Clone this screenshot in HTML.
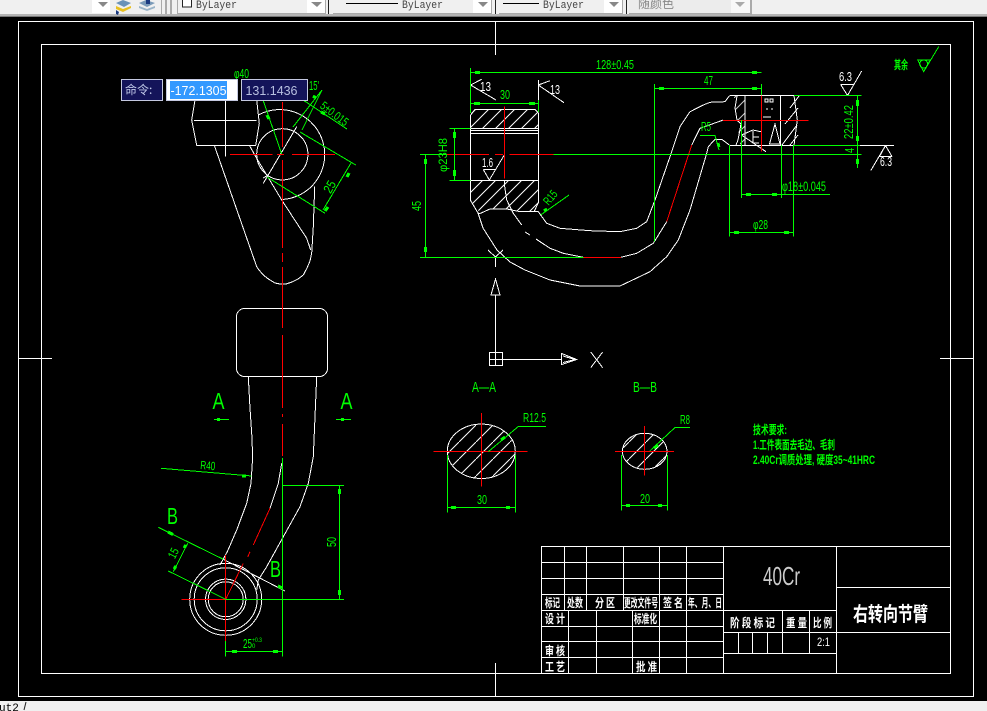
<!DOCTYPE html>
<html><head><meta charset="utf-8"><title>CAD</title>
<style>
html,body{margin:0;padding:0;background:#000;width:987px;height:711px;overflow:hidden}
svg{display:block;position:absolute;left:0;top:0}
text{font-family:"Liberation Sans","Noto Sans CJK SC",sans-serif}
.m{font-family:"Liberation Mono","Noto Sans CJK SC",monospace;fill:#444;font-size:11px}
.g text{fill:#0f0;stroke:none;font-size:13px}
.t text{fill:#fff;font-size:12px;font-weight:700;stroke:none;font-family:"Noto Sans CJK SC","Liberation Sans",sans-serif}
.c text{fill:#0f0;font-weight:700;font-size:12px;stroke:none;font-family:"Liberation Sans","Noto Sans CJK SC",sans-serif}
</style></head><body>
<svg width="987" height="711" viewBox="0 0 987 711" xmlns="http://www.w3.org/2000/svg">
<defs>
<pattern id="h1" patternUnits="userSpaceOnUse" width="13" height="13"><path d="M-1 14L14-1M-1 1L1-1M12 14L14 12" stroke="#fff" stroke-width="1" fill="none"/></pattern>
<pattern id="h2" patternUnits="userSpaceOnUse" width="17" height="17"><path d="M-1 18L18-1" stroke="#fff" stroke-width="1" fill="none"/></pattern>
</defs>
<rect width="987" height="711" fill="#000"/>
<!-- toolbar -->
<rect width="987" height="14" fill="#f0f0f0"/>
<rect y="14" width="987" height="3" fill="#b4b4b4"/>
<rect y="16" width="987" height="1" fill="#777"/>
<rect x="92" width="18" height="13" fill="#fff"/>
<rect x="161" width="1" height="14" fill="#aaa"/>
<rect x="165" width="2" height="14" fill="#aaa"/><rect x="170" width="2" height="14" fill="#aaa"/>
<path d="M98 2h10l-5 5z" fill="#888"/>
<path d="M116 3l7-3 8 3-7 4z" fill="#6a92b8"/><path d="M116 6l7 3 8-3v2l-8 4-7-3z" fill="#e8c020"/><path d="M116 10l3 2-1 3-2-1z" fill="#1a3a80"/>
<path d="M139 3l7-3 9 3-8 4z" fill="#7a9ab8"/><path d="M139 6l8 3 8-3v2l-8 3-8-3z" fill="#9ab4c8"/><path d="M146 0h4v4h-4z" fill="#1a3a80"/>
<rect x="177" y="13" width="148" height="1" fill="#aaa"/><rect x="177" width="1" height="13" fill="#aaa"/>
<rect x="307" width="18" height="13" fill="#fff"/><rect x="325" width="1" height="14" fill="#aaa"/>
<rect x="182.5" y="-1" width="9" height="8" fill="#fff" stroke="#222"/>
<path d="M311 2h11l-5 5z" fill="#888"/>
<text class="m" x="196" y="8" textLength="41" lengthAdjust="spacingAndGlyphs">ByLayer</text>
<rect x="328" width="1" height="14" fill="#222"/>
<rect x="333" y="13" width="159" height="1" fill="#aaa"/><rect x="491" width="1" height="14" fill="#aaa"/>
<rect x="473" width="18" height="13" fill="#fff"/>
<path d="M346 3.5h52" stroke="#000"/>
<text class="m" x="402" y="8" textLength="41" lengthAdjust="spacingAndGlyphs">ByLayer</text>
<path d="M478 2h10l-5 5z" fill="#888"/>
<rect x="495" width="1" height="14" fill="#222"/>
<rect x="499" y="13" width="124" height="1" fill="#aaa"/><rect x="622" width="1" height="14" fill="#aaa"/>
<rect x="604" width="18" height="13" fill="#fff"/>
<path d="M503 3.5h36" stroke="#000"/>
<text class="m" x="543" y="8" textLength="41" lengthAdjust="spacingAndGlyphs">ByLayer</text>
<path d="M609 2h10l-5 5z" fill="#888"/>
<rect x="626" width="1" height="14" fill="#222"/>
<rect x="629" width="122" height="13" fill="#ececec"/><rect x="629" y="13" width="122" height="1" fill="#aaa"/><rect x="750" width="2" height="15" fill="#aaa"/>
<rect x="731" width="19" height="13" fill="#f8f8f8"/>
<path d="M735 2h10l-5 5z" fill="#aaa"/>
<text class="m" x="638" y="8" style="font-size:12px;fill:#888">随颜色</text>

<!-- bottom bar -->
<rect y="701" width="987" height="10" fill="#f0f0f0"/>
<text class="m" x="-1" y="711" style="fill:#000;font-size:11px">ut2</text>
<path d="M26 702l-2 8" stroke="#222"/>

<g shape-rendering="crispEdges">
<!-- frames -->
<g fill="none" stroke="#fff" stroke-width="1">
<rect x="18.5" y="21.5" width="955" height="675"/>
<rect x="41.5" y="44.5" width="909" height="629"/>
<path d="M495.5 21v34M495.5 663v33M18 358.5h34M940 358.5h33"/>
<!-- top-left view -->
<path d="M195 100L191.7 120L196.7 145.3H255.7L259.3 123.3L256.7 100"/>
<path d="M194 120.5H256.7M225.5 100V156.7"/>
<path d="M214.3 145.3L256.7 266.7L259 270L263.3 275L267 278L270 280L275 283L280 284L286 284L292 282L298 279L303.3 275L307 268L310 261L311.7 253L313.3 226.7L314.7 186.7"/>
<path d="M249.3 145.3L256.7 158.3L281.7 200L306.7 238.3L310.7 250"/>
<path d="M263.3 183.3L296.7 126.7"/>
<path d="M263.3 178L268 175"/>
<path d="M282.3 199.5A45 45 0 1 0 258.3 115"/>
<circle cx="282.3" cy="154.3" r="25.6"/>
<!-- lower-left view -->
<rect x="236.5" y="308.5" width="91" height="68" rx="8"/>
<path d="M248.3 376.7L250 408.3L251.7 433.3L252.7 456.7L251 483.3L246.7 503.3L236.7 530L227.3 551.7L220 565"/>
<path d="M316.7 376.7L315 416.7L313.3 456.7L308.3 483.3L300 506.7L283.3 536.7L266.7 566.7L258.3 580L256.7 590"/>
<path d="M281.7 463.3L278.3 483.3L270 508.3"/>
<path d="M223.3 559.3L285 591"/>
<circle cx="225.7" cy="599.3" r="36"/><circle cx="225.7" cy="599.3" r="31.5"/>
<circle cx="225.7" cy="599.3" r="20.2"/><circle cx="225.7" cy="599.3" r="17.5"/>
<!-- side view -->
<path d="M470.7 115L475 109.3H535L538.3 113V203L534 211.7"/>
<path d="M470.7 115V200.7L478 213L480 213.5L490 209L507 209L520 211.7L538.3 211.7"/>
<path d="M470.7 128.5H538.3M470.7 130.5H538.3M470.7 133.5H538.3M470.7 180.5H538.3"/>
<path d="M538.3 211.7L546.7 223.3L560 228.3L590 230.7L620 231.7L636.7 228.3L646.7 221.7L655 200L670 156.7L680 126.7L690 111.7L703.3 105L710 102.3L725 101.7L729.3 96"/>
<path d="M478 213L483 228L497 250L510 262L525 270L550 280L580 286L620 286L650 271.7L666.7 256.7L678.3 240L690 210L706.7 153.3L708.3 146.7L715 139.3L721.7 139.3L729.3 145"/>
<path d="M504.7 180V186.7L506.7 200L513.3 213.3L521.7 225M525 232L530 235M536 239L550 248.3L563.3 253.3L583.3 257.3M621 257.3L636.7 253.3L653.3 243.3L666.7 221.7M691.7 145L700 128.3L723.3 120"/>
<!-- hub -->
<path d="M729.3 95.5H794M729.3 145.5H794"/>
<path d="M794 95.5L797.3 120L794 145.5"/>
<path d="M780.7 95.5V145.5M737 96L735 108L737 120L741 124L738 140L736 145M745 96V145"/>
<path d="M765 99h3v3h-3zM770 99h3v3h-3zM766 109h2M771 109h2M763 117h8M741.5 135L753 130L762 132M741.5 135L766 151.7M753 131V143h6M753 137h6M769.5 144L775 124L780 144M769 144H781"/>
<path d="M799 96L790 108M798 108L785 124M797 125L782 145M790 145L798 135"/>
<path d="M470.5 85L481.7 79.3M470.5 85L496 100M538.3 85L550 80.7M538.3 85L564 102.7M538.5 80V100"/>
<path d="M483.3 169.5H496M483.3 169.5L489.3 180L504.3 155"/>
<path d="M840.7 84.5H854M840.7 84.5L847.5 95.5L861.7 71"/>
<path d="M879.5 156.5H892M885.5 145.5L879.5 156.5M885.5 145.5L892 156.5M885.5 145.5L870.7 170.7"/>
<path d="M860 145.5H894"/>
<path d="M491 295L495.5 279L500 295ZM495.5 295V352"/>
<rect x="489.5" y="352.5" width="13" height="13"/>
<path d="M489.5 359.5H502.5M495.5 352.5V365.5M502.7 359.5H561.7"/>
<path d="M561.7 353.5L576.7 359.5L561.7 364.5Z"/>
<path d="M563 356L575 359.5L563 362.5M590.7 352L602.7 367.7M602.7 352L590.7 367.7"/>
<path d="M495.5 257V267M488 250L495.5 257L503 250"/>
<!-- sections -->
<ellipse cx="481.3" cy="451.3" rx="34" ry="27.2"/>
<ellipse cx="644.7" cy="451.3" rx="22.3" ry="18"/>
</g>
<rect x="471" y="110" width="67" height="18" fill="url(#h1)"/>
<path d="M471 181H538V203L534 211H520L507 209H490L480 213L471 201Z" fill="url(#h1)"/>
<path d="M734 96H745V145H740Z" fill="url(#h1)" opacity=".8"/>
<ellipse cx="481.3" cy="451.3" rx="33.5" ry="26.7" fill="url(#h2)"/>
<ellipse cx="644.7" cy="451.3" rx="21.8" ry="17.5" fill="url(#h2)"/>

<!-- red -->
<g fill="none" stroke="#f00" stroke-width="1">
<path d="M230 154.5H272.7M277 154.5H284M292 154.5H335"/>
<path d="M282.5 102V147M282.5 160V248M282.5 253V262M282.5 267V328M282.5 335V408M282.5 414V417M282.5 424V456"/>
<path d="M270 508.3L253.3 545M250 551.7L247.7 557M243.3 563.3L225.7 599.3"/>
<path d="M181.7 599.5H225.7M225.5 555V641.7"/>
<path d="M504.5 106.7V178.3"/>
<path d="M446.7 154.5H489M495 154.5H503M509.3 154.5H553.3"/>
<path d="M583.3 257.5H621M666.7 221.7L691.7 145"/>
<path d="M761.5 95.3V151.7M723 120.5H808.7"/>
<path d="M433.3 451.5H527.7M481.5 413V486.7M615 451.5H674M644.5 426V475.7"/>
</g>

<!-- green lines -->
<g fill="none" stroke="#0f0" stroke-width="1">
<path d="M263 100L281.7 154M293 127L322 90M302 130L322 90M303 100L347 129"/>
<path d="M300 132L355.7 165M267 177L325 213.3M323 210L351 163"/>
<path d="M282.5 458V656.7M225.7 599.5H344M282.7 485.5H344M339.5 485.3V599.3M161 468.3L251.7 476M214 419.5H229M336 419.5H351"/>
<path d="M158.3 527.3L223.3 559.3M168.3 571L225.7 599.3M187.7 543.3L173.3 571.7"/>
<path d="M225.5 641V656.7M225.7 651.5H282.7"/>
<path d="M470.5 68V113M470.7 72.5H761.7M761.5 84V95M654.5 84V241.7M654.5 88.5H761.7M470.7 103.5H538.3M538.5 100V112"/>
<path d="M420 154.5H446.7M553.3 154.5H861.7M449.3 128.5H470.7M449.3 180.5H470.7M454.5 128.5V180.5"/>
<path d="M420 257.5H583.3M425.5 154.5V257.5M540.7 215L569 195"/>
<path d="M794 95.5H861.7M794 145.5H860M857.5 95V168"/>
<path d="M741.5 120V198M781.5 145V198M741.5 194.5H830M729.5 145V236.7M793.5 145V236.7M729.5 232.5H793.5"/>
<path d="M700 135.5H715L719 150"/>
<path d="M546 426.5H518.3L488.3 451.7M690 427.5H675L650 450.7"/>
<path d="M447.5 455V512.7M515.5 455V512.7M447.5 507.5H515.5M621.5 455V510.7M667.5 455V510.7M621.5 505.5H667.5"/>
<path d="M917.7 60H930.3L923.7 71.7ZM923.7 71.7L938.7 46.7"/>
<circle cx="923.7" cy="64" r="4"/>
</g>
<!-- green arrow marks -->
<g fill="none" stroke="#0f0" stroke-width="3">
<path d="M475 72.5h5M752 72.5h5M659 88.5h5M752 88.5h5M474 103.5h6M529 103.5h6"/>
<path d="M454.5 132v6M454.5 170v6M425.5 159v5M425.5 247v5"/>
<path d="M857.5 100v6M857.5 136v5M857.5 159v5"/>
<path d="M746 194.5h5M772 194.5h5M734 232.5h5M784 232.5h5"/>
<path d="M339.5 489v5M339.5 590v5M232 651.5h5M273 651.5h5"/>
<path d="M242 476h4M217 419.5h3M341 419.5h3"/>
<path d="M168 532l5 2.5M278 586l4 2M186 545l-2 3M176 566l-2 3"/>
<path d="M267 115l2 4M313 96l3 2M321 112l4 2"/>
<path d="M349 173l-2 4M328 207l-3 4"/>
<path d="M451 507.5h5M506 507.5h4M626 505.5h4M658 505.5h4"/>
<path d="M505 437l-4 3M658 445l-4 3M544 211l3-2M718 143l1 4"/>
</g>

<!-- white table -->
<g fill="none" stroke="#fff" stroke-width="1">
<rect x="541.5" y="546.5" width="409" height="127"/>
<path d="M541.5 562.5H723.5M541.5 578.5H723.5M541.5 594.5H723.5M541.5 610.5H836.5M541.5 626.5H723.5M541.5 641.5H723.5M541.5 657.5H723.5"/>
<path d="M564.5 546.5V610.5M586.5 546.5V610.5M623.5 546.5V610.5M659.5 546.5V673.5M686.5 546.5V673.5M723.5 546.5V673.5"/>
<path d="M568.5 610.5V673.5M596.5 610.5V673.5M632.5 610.5V673.5"/>
<path d="M836.5 546.5V673.5M836.5 587.5H950.5M723.5 632.5H950.5M723.5 653.5H836.5"/>
<path d="M738.5 632.5V653.5M752.5 632.5V653.5M767.5 632.5V653.5M782.5 610.5V653.5M809.5 610.5V653.5"/>
</g>
</g>

<!-- green text -->
<g class="g">
<text x="234" y="78" textLength="15" lengthAdjust="spacingAndGlyphs">φ40</text>
<text x="309" y="90" textLength="10" lengthAdjust="spacingAndGlyphs">15'</text>
<text transform="translate(321 105) rotate(37)" x="0" y="3" textLength="32" lengthAdjust="spacingAndGlyphs" style="font-size:12px">5±0.015</text>
<text transform="translate(330 187) rotate(-60)" x="-6" y="4" textLength="12" lengthAdjust="spacingAndGlyphs">25</text>
<text x="596" y="69" textLength="38" lengthAdjust="spacingAndGlyphs">128±0.45</text>
<text x="704" y="85" textLength="9" lengthAdjust="spacingAndGlyphs">47</text>
<text x="500" y="99" textLength="10" lengthAdjust="spacingAndGlyphs">30</text>
<text transform="translate(447 155) rotate(-90)" x="-17" y="0" textLength="34" lengthAdjust="spacingAndGlyphs" style="font-size:12px">φ23H8</text>
<text transform="translate(421 206) rotate(-90)" x="-5" y="0" textLength="10" lengthAdjust="spacingAndGlyphs">45</text>
<text transform="translate(550 198) rotate(-50)" x="-7" y="4" textLength="15" lengthAdjust="spacingAndGlyphs" style="font-size:12px">R15</text>
<text x="701" y="131" textLength="10" lengthAdjust="spacingAndGlyphs">R5</text>
<text transform="translate(853 122) rotate(-90)" x="-17" y="0" textLength="34" lengthAdjust="spacingAndGlyphs">22±0.42</text>
<text transform="translate(854 150) rotate(-90)" x="-3" y="0" textLength="5" lengthAdjust="spacingAndGlyphs">4</text>
<text x="782" y="191" textLength="44" lengthAdjust="spacingAndGlyphs" style="font-size:14px">φ18±0.045</text>
<text x="753" y="229" textLength="15" lengthAdjust="spacingAndGlyphs">φ28</text>
<text transform="translate(200 469) rotate(5)" textLength="15" lengthAdjust="spacingAndGlyphs" style="font-size:12px">R40</text>
<text x="212.5" y="409" textLength="12" lengthAdjust="spacingAndGlyphs" style="font-size:23px">A</text>
<text x="340.5" y="409" textLength="12" lengthAdjust="spacingAndGlyphs" style="font-size:23px">A</text>
<text x="167" y="524" textLength="11" lengthAdjust="spacingAndGlyphs" style="font-size:23px">B</text>
<text x="270" y="577" textLength="11" lengthAdjust="spacingAndGlyphs" style="font-size:23px">B</text>
<text transform="translate(177 555) rotate(-63)" x="-5" y="0" textLength="10" lengthAdjust="spacingAndGlyphs" style="font-size:12px">15</text>
<text transform="translate(336 542) rotate(-90)" x="-5" y="0" textLength="10" lengthAdjust="spacingAndGlyphs">50</text>
<text x="243" y="648" textLength="9" lengthAdjust="spacingAndGlyphs">25</text>
<text x="252" y="642" textLength="10" lengthAdjust="spacingAndGlyphs" style="font-size:6px">+0.3</text>
<text x="252" y="648" style="font-size:6px">0</text>
<text x="472" y="392" textLength="24" lengthAdjust="spacingAndGlyphs" style="font-size:15px">A—A</text>
<text x="633" y="392" textLength="24" lengthAdjust="spacingAndGlyphs" style="font-size:15px">B—B</text>
<text x="523" y="422" textLength="23" lengthAdjust="spacingAndGlyphs">R12.5</text>
<text x="680" y="424" textLength="10" lengthAdjust="spacingAndGlyphs">R8</text>
<text x="477" y="504" textLength="10" lengthAdjust="spacingAndGlyphs">30</text>
<text x="640" y="503" textLength="10" lengthAdjust="spacingAndGlyphs">20</text>
</g>
<g class="c">
<text x="894" y="69" textLength="14" lengthAdjust="spacingAndGlyphs" style="font-size:12px">其余</text>
<text x="753" y="434" textLength="34" lengthAdjust="spacingAndGlyphs">技术要求:</text>
<text x="753" y="449" textLength="82" lengthAdjust="spacingAndGlyphs">1.工件表面去毛边、毛刺</text>
<text x="753" y="464" textLength="122" lengthAdjust="spacingAndGlyphs">2.40Cr调质处理, 硬度35~41HRC</text>
</g>
<g fill="#fff" font-size="13" stroke="none">
<text x="482" y="167" textLength="11" lengthAdjust="spacingAndGlyphs">1.6</text>
<text x="839" y="81" textLength="13" lengthAdjust="spacingAndGlyphs">6.3</text>
<text x="880" y="166" textLength="12" lengthAdjust="spacingAndGlyphs">6.3</text>
<text x="480" y="91" textLength="11" lengthAdjust="spacingAndGlyphs">13</text>
<text x="550" y="94" textLength="10" lengthAdjust="spacingAndGlyphs">13</text>
<text x="763" y="585" textLength="37" lengthAdjust="spacingAndGlyphs" font-size="26" fill="#ccc">40Cr</text>
<text x="817" y="646" textLength="13" lengthAdjust="spacingAndGlyphs" font-size="12">2:1</text>
</g>
<text x="853" y="621" textLength="75" lengthAdjust="spacingAndGlyphs" style="font-size:20px;font-weight:700;fill:#fff;font-family:'Noto Sans CJK SC',sans-serif">右转向节臂</text>
<g class="t">
<text x="545" y="607" textLength="15" lengthAdjust="spacingAndGlyphs">标记</text>
<text x="567" y="607" textLength="16" lengthAdjust="spacingAndGlyphs">处数</text>
<text x="595" y="607" textLength="20" lengthAdjust="spacingAndGlyphs">分 区</text>
<text x="624" y="607" textLength="34" lengthAdjust="spacingAndGlyphs">更改文件号</text>
<text x="663" y="607" textLength="20" lengthAdjust="spacingAndGlyphs">签 名</text>
<text x="688" y="607" textLength="34" lengthAdjust="spacingAndGlyphs">年、月、日</text>
<text x="545" y="623" textLength="20" lengthAdjust="spacingAndGlyphs">设 计</text>
<text x="634" y="623" textLength="23" lengthAdjust="spacingAndGlyphs">标准化</text>
<text x="545" y="655" textLength="20" lengthAdjust="spacingAndGlyphs">审 核</text>
<text x="545" y="671" textLength="20" lengthAdjust="spacingAndGlyphs">工 艺</text>
<text x="636" y="671" textLength="21" lengthAdjust="spacingAndGlyphs">批 准</text>
<text x="730" y="627" textLength="45" lengthAdjust="spacingAndGlyphs">阶 段 标 记</text>
<text x="786" y="627" textLength="21" lengthAdjust="spacingAndGlyphs">重 量</text>
<text x="813" y="627" textLength="19" lengthAdjust="spacingAndGlyphs">比 例</text>
</g>

<!-- command input -->
<rect x="121.5" y="79.5" width="41" height="21" fill="#14145a" stroke="#c4c8e0"/>
<text x="125" y="94" style="font-size:12px;fill:#c0c8e8;font-family:'Noto Sans CJK SC',sans-serif">命令:</text>
<rect x="166.5" y="79.5" width="71" height="21" fill="#fff" stroke="#c4c8e0"/>
<rect x="170" y="81" width="57" height="18" fill="#3399ff"/>
<text x="170.5" y="95" textLength="56" lengthAdjust="spacingAndGlyphs" style="font-size:13px;fill:#fff">-172.1305</text>
<rect x="241.5" y="79.5" width="66" height="21" fill="#14145a" stroke="#c4c8e0"/>
<text x="245.5" y="95" textLength="52" lengthAdjust="spacingAndGlyphs" style="font-size:13px;fill:#b8c0e0">131.1436</text>
</svg>
</body></html>
